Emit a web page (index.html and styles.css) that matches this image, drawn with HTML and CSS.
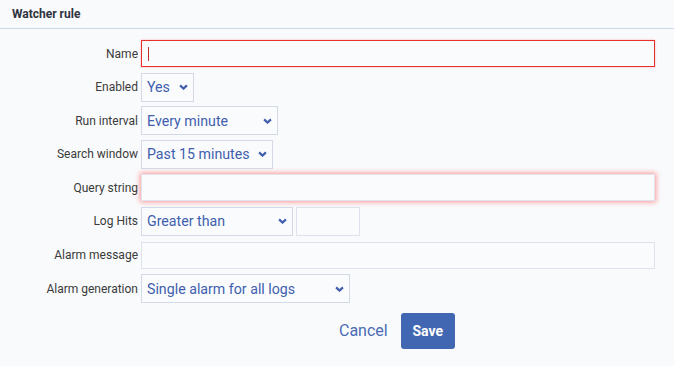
FILE: index.html
```html
<!DOCTYPE html>
<html lang="en">
<head>
    <meta charset="UTF-8">
    <title>Watcher rule</title>
    <link rel="stylesheet" href="styles.css">
</head>
<body>
    <div class="panel">
        <div class="panel-head">Watcher rule</div>
        <form class="rule-form">
            <label class="lbl">Name</label>
            <div class="ctl"><input class="field field-wide field-error" type="text"><span class="caret"></span></div>

            <label class="lbl">Enabled</label>
            <div class="ctl">
                <span class="pick" style="width:53px">
                    <select><option>Yes</option><option>No</option></select>
                    <svg class="chev" viewBox="0 0 10 6"><path d="M1.2 1.2l3.8 3.6 3.8-3.6"/></svg>
                </span>
            </div>

            <label class="lbl">Run interval</label>
            <div class="ctl">
                <span class="pick" style="width:137px">
                    <select><option>Every minute</option></select>
                    <svg class="chev" viewBox="0 0 10 6"><path d="M1.2 1.2l3.8 3.6 3.8-3.6"/></svg>
                </span>
            </div>

            <label class="lbl">Search window</label>
            <div class="ctl">
                <span class="pick" style="width:132px">
                    <select><option>Past 15 minutes</option></select>
                    <svg class="chev" viewBox="0 0 10 6"><path d="M1.2 1.2l3.8 3.6 3.8-3.6"/></svg>
                </span>
            </div>

            <label class="lbl">Query string</label>
            <div class="ctl"><input class="field field-wide field-glow" type="text"></div>

            <label class="lbl">Log Hits</label>
            <div class="ctl">
                <span class="pick" style="width:152px">
                    <select><option>Greater than</option></select>
                    <svg class="chev" viewBox="0 0 10 6"><path d="M1.2 1.2l3.8 3.6 3.8-3.6"/></svg>
                </span>
                <input class="field field-num" type="text">
            </div>

            <label class="lbl">Alarm message</label>
            <div class="ctl"><input class="field field-wide" type="text"></div>

            <label class="lbl">Alarm generation</label>
            <div class="ctl">
                <span class="pick" style="width:209px">
                    <select><option>Single alarm for all logs</option></select>
                    <svg class="chev" viewBox="0 0 10 6"><path d="M1.2 1.2l3.8 3.6 3.8-3.6"/></svg>
                </span>
            </div>
        </form>
        <div class="actions">
            <a class="cancel" href="#">Cancel</a>
            <button class="save" type="button">Save</button>
        </div>
    </div>
</body>
</html>
```

FILE: styles.css
```css
* {
    margin: 0;
    padding: 0;
    box-sizing: border-box;
}

body {
    background: #f9fafc;
    font-family: Roboto, "Liberation Sans", sans-serif;
    color: #333;
    width: 674px;
    height: 366px;
    overflow: hidden;
}

.panel-head {
    height: 29px;
    padding: 7px 0 0 12px;
    font-size: 12px;
    font-weight: bold;
    color: #2f3440;
    border-bottom: 1px solid #cfd8e8;
}

.rule-form {
    display: grid;
    grid-template-columns: 138px 514px;
    grid-auto-rows: 28px;
    row-gap: 5.6px;
    column-gap: 3px;
    margin-top: 10.5px;
}

.lbl {
    font-size: 12px;
    color: #3a3a3a;
    text-align: right;
    align-self: center;
}

.ctl {
    position: relative;
    display: flex;
    align-items: center;
    gap: 3px;
}

.field {
    height: 27px;
    border: 1px solid #dde2ec;
    background: #fafbfd;
    outline: none;
}

.field-wide {
    width: 514px;
}

.field-error {
    border-color: #e8312f;
    box-shadow: 0 0 2px rgba(232, 49, 47, 0.35);
}

.field-glow {
    border-color: #e4e2ec;
    box-shadow: 0 0 5px 1px rgba(255, 105, 105, 0.7);
}

.field-num {
    width: 64px;
    height: 29px;
}

.caret {
    position: absolute;
    left: 7px;
    top: 7px;
    width: 1px;
    height: 14px;
    background: #c0302e;
}

.pick {
    position: relative;
    display: inline-block;
    height: 29px;
}

.pick select {
    appearance: none;
    -webkit-appearance: none;
    width: 100%;
    height: 100%;
    border: 1px solid #d3d9e6;
    background: #fafbfd;
    border-radius: 0;
    padding: 0 8px 0 5px;
    font-family: Roboto, "Liberation Sans", sans-serif;
    font-size: 14.2px;
    color: #3f5fae;
    outline: none;
}

.chev {
    position: absolute;
    right: 6px;
    top: 11.5px;
    width: 9px;
    height: 6px;
    fill: none;
    stroke: #3f5fae;
    stroke-width: 2.4;
    pointer-events: none;
}

.actions {
    display: flex;
    align-items: center;
    gap: 13px;
    margin: 10px 0 0 339px;
}

.cancel {
    font-size: 16px;
    color: #4a6cb3;
    text-decoration: none;
}

.save {
    width: 54px;
    height: 36px;
    border: none;
    border-radius: 3px;
    background: #4267b2;
    color: #fff;
    font-family: Roboto, "Liberation Sans", sans-serif;
    font-size: 14px;
    font-weight: bold;
}
```
